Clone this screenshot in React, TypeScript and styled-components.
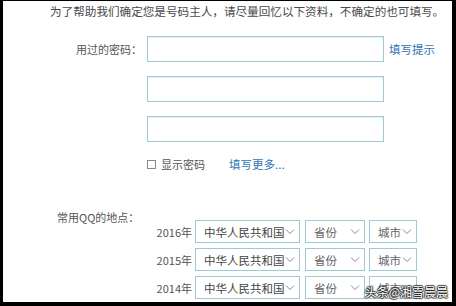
import React from "react";
import styled, { createGlobalStyle } from "styled-components";

const Global = createGlobalStyle`
  html, body { margin: 0; padding: 0; background: #000; }
  body { font-family: "Noto Sans CJK SC", "Noto Sans", sans-serif; }
`;

const Frame = styled.div`
  width: 456px;
  height: 306px;
  box-sizing: border-box;
  padding: 1px 4px 4px 3px;
  background: #000;
`;

const Panel = styled.div`
  position: relative;
  width: 100%;
  height: 100%;
  background: #fff;
  overflow: hidden;
  display: flex;
  flex-direction: column;
  color: #555;
  font-size: 11.5px;
`;

const Header = styled.div`
  padding-left: 47px;
  margin-top: 1px;
  height: 18px;
  line-height: 18px;
  font-size: 11.6px;
  color: #4a4a4a;
  white-space: nowrap;
`;

const FieldRow = styled.div<{ $mt: number }>`
  display: flex;
  align-items: center;
  margin-top: ${(p) => p.$mt}px;
  height: 26px;
`;

const Label = styled.div`
  width: 139px;
  text-align: right;
  font-size: 11px;
  color: #555;
  white-space: nowrap;
`;

const Input = styled.div`
  margin-left: 5px;
  width: 237px;
  height: 26px;
  box-sizing: border-box;
  border: 1px solid #9fcad4;
  box-shadow: inset 0 1px 1px rgba(160, 200, 210, 0.25);
  background: #fff;
`;

const Link = styled.span<{ $ml: number }>`
  margin-left: ${(p) => p.$ml}px;
  color: #2f74b5;
  font-size: 11.5px;
  white-space: nowrap;
`;

const CheckRow = styled.div`
  display: flex;
  align-items: center;
  margin-top: 15px;
  padding-left: 144px;
  height: 14px;
  font-size: 11px;
`;

const Box = styled.span`
  width: 9px;
  height: 9px;
  border: 1px solid #888;
  box-sizing: border-box;
  background: #fff;
`;

const CheckText = styled.span`
  margin-left: 5px;
  color: #555;
`;

const LocLabel = styled.div`
  margin-top: 38px;
  padding-left: 54px;
  height: 16px;
  line-height: 16px;
  font-size: 11px;
  color: #555;
`;

const SelectRows = styled.div`
  display: flex;
  flex-direction: column;
  gap: 5px;
  margin-top: -5px;
`;

const SelectRow = styled.div`
  display: flex;
  align-items: center;
  height: 23px;
`;

const Year = styled.div`
  width: 189px;
  text-align: right;
  font-size: 11px;
  color: #555;
`;

const Select = styled.div<{ $w: number; $ml: number }>`
  margin-left: ${(p) => p.$ml}px;
  width: ${(p) => p.$w}px;
  height: 23px;
  box-sizing: border-box;
  border: 1px solid #9fcad4;
  display: flex;
  align-items: center;
  justify-content: space-between;
  padding: 0 4px 0 8px;
  font-size: 11.5px;
  color: #444;
  white-space: nowrap;
`;

const SelText = styled.span<{ $c?: string }>`
  color: ${(p) => p.$c || "#444"};
`;

const Watermark = styled.div`
  position: absolute;
  right: 4px;
  bottom: 2px;
  color: #fff;
  font-size: 12px;
  text-shadow: 1px 0 1px #222, -1px 0 1px #222, 0 1px 1px #222, 0 -1px 1px #222;
  white-space: nowrap;
`;

const Chevron = () => (
  <svg width="10" height="7" viewBox="0 0 10 7">
    <path d="M1 1.5 L5 5.5 L9 1.5" fill="none" stroke="#8a8a8a" strokeWidth="1" />
  </svg>
);

const years = ["2016年", "2015年", "2014年"];

export default function App() {
  return (
    <>
      <Global />
      <Frame>
        <Panel>
          <Header>为了帮助我们确定您是号码主人，请尽量回忆以下资料，不确定的也可填写。</Header>
          <FieldRow $mt={16}>
            <Label>用过的密码：</Label>
            <Input />
            <Link $ml={5}>填写提示</Link>
          </FieldRow>
          <FieldRow $mt={14}>
            <Label />
            <Input />
          </FieldRow>
          <FieldRow $mt={14}>
            <Label />
            <Input />
          </FieldRow>
          <CheckRow>
            <Box />
            <CheckText>显示密码</CheckText>
            <Link $ml={24}>填写更多...</Link>
          </CheckRow>
          <LocLabel>常用QQ的地点：</LocLabel>
          <SelectRows>
            {years.map((y) => (
              <SelectRow key={y}>
                <Year>{y}</Year>
                <Select $w={105} $ml={3}>
                  <SelText>中华人民共和国</SelText>
                  <Chevron />
                </Select>
                <Select $w={60} $ml={5}>
                  <SelText $c="#666">省份</SelText>
                  <Chevron />
                </Select>
                <Select $w={48} $ml={4}>
                  <SelText $c="#666">城市</SelText>
                  <Chevron />
                </Select>
              </SelectRow>
            ))}
          </SelectRows>
          <Watermark>头条@湘雪晨晨</Watermark>
        </Panel>
      </Frame>
    </>
  );
}
